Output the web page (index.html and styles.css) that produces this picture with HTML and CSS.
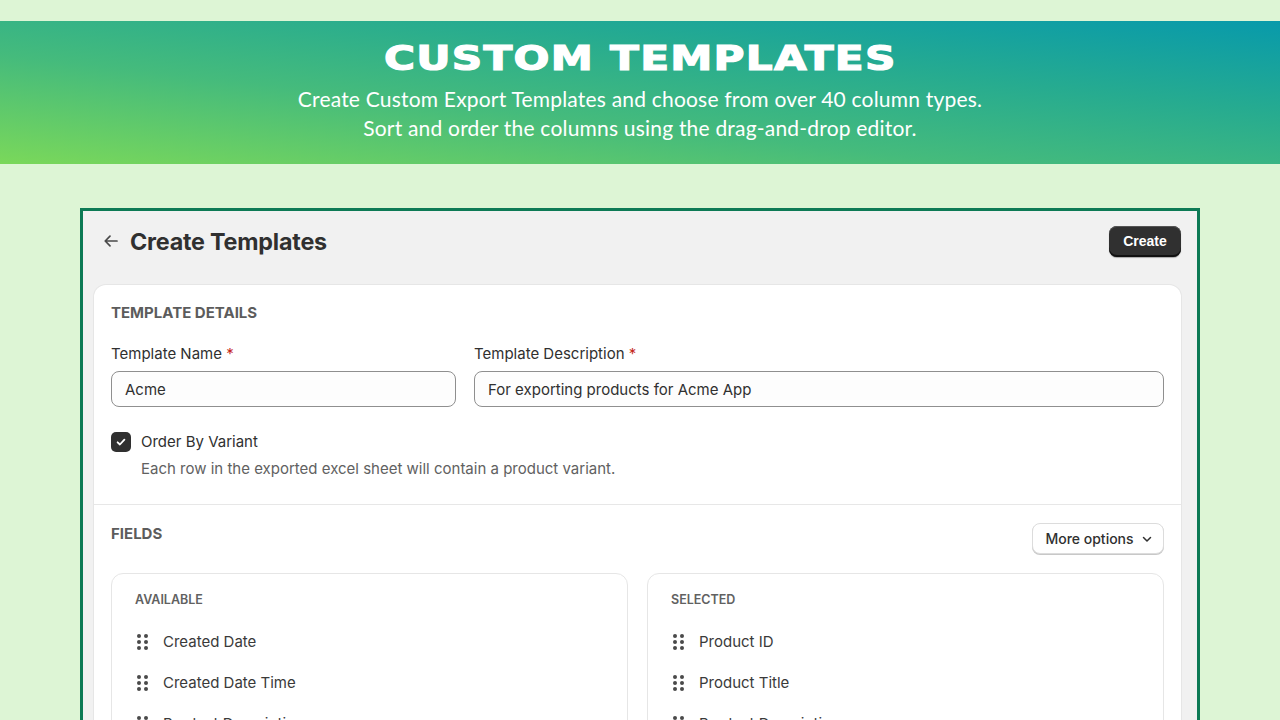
FILE: index.html
```html
<!DOCTYPE html>
<html>
<head>
<meta charset="utf-8">
<link rel="stylesheet" href="styles.css">
</head>
<body>
<div class="page">
  <header class="banner">
    <h1 class="banner-title">CUSTOM TEMPLATES</h1>
    <p class="banner-sub">Create Custom Export Templates and choose from over 40 column types.<br>Sort and order the columns using the drag-and-drop editor.</p>
  </header>

  <div class="window">
    <div class="topbar">
      <div class="topbar-left">
        <svg class="back" width="18" height="18" viewBox="0 0 18 18"><path d="M15 9H3.5M8 4.2 3.2 9 8 13.8" fill="none" stroke="#4a4a4a" stroke-width="1.7" stroke-linecap="round" stroke-linejoin="round"/></svg>
        <h2 class="page-title">Create Templates</h2>
      </div>
      <button class="btn-primary">Create</button>
    </div>

    <div class="card">
      <section class="section details">
        <h3 class="section-title">TEMPLATE DETAILS</h3>
        <div class="form-grid">
          <div class="field">
            <label class="label">Template Name <span class="req">*</span></label>
            <div class="input">Acme</div>
          </div>
          <div class="field">
            <label class="label">Template Description <span class="req">*</span></label>
            <div class="input">For exporting products for Acme App</div>
          </div>
        </div>
        <div class="check-row">
          <span class="checkbox"><svg width="12" height="12" viewBox="0 0 12 12"><path d="M2.6 6.3 4.9 8.5 9.4 3.6" fill="none" stroke="#fff" stroke-width="1.8" stroke-linecap="round" stroke-linejoin="round"/></svg></span>
          <div class="check-text">
            <div class="check-label">Order By Variant</div>
            <div class="help">Each row in the exported excel sheet will contain a product variant.</div>
          </div>
        </div>
      </section>

      <section class="section fields">
        <div class="fields-head">
          <h3 class="section-title">FIELDS</h3>
          <button class="btn-secondary">More options
            <svg width="16" height="16" viewBox="0 0 16 16"><path d="M4.5 6.5 8 10l3.5-3.5" fill="none" stroke="#303030" stroke-width="1.5" stroke-linecap="round" stroke-linejoin="round"/></svg>
          </button>
        </div>
        <div class="lists">
          <div class="list">
            <div class="list-title">AVAILABLE</div>
            <div class="item"><span class="grip"><i></i><i></i><i></i><i></i><i></i><i></i></span>Created Date</div>
            <div class="item"><span class="grip"><i></i><i></i><i></i><i></i><i></i><i></i></span>Created Date Time</div>
            <div class="item"><span class="grip"><i></i><i></i><i></i><i></i><i></i><i></i></span>Product Description</div>
          </div>
          <div class="list">
            <div class="list-title">SELECTED</div>
            <div class="item"><span class="grip"><i></i><i></i><i></i><i></i><i></i><i></i></span>Product ID</div>
            <div class="item"><span class="grip"><i></i><i></i><i></i><i></i><i></i><i></i></span>Product Title</div>
            <div class="item"><span class="grip"><i></i><i></i><i></i><i></i><i></i><i></i></span>Product Description</div>
          </div>
        </div>
      </section>
    </div>
  </div>
</div>
</body>
</html>
```

FILE: styles.css
```css
* { box-sizing: border-box; }
html, body { margin: 0; padding: 0; }
body {
  width: 1280px;
  height: 720px;
  overflow: hidden;
  background: #ddf5d5;
  font-family: Inter, "Noto Sans", sans-serif;
  color: #303030;
}
.page {
  padding-top: 21px;
  height: 720px;
  overflow: hidden;
}
.banner {
  height: 143px;
  background: linear-gradient(to top right, #7ad85a 0%, #45bb7c 38%, #26ab90 68%, #089aab 100%);
  text-align: center;
  color: #fff;
  padding-top: 21px;
}
.banner-title {
  margin: 0;
  font-family: "DejaVu Sans", sans-serif;
  font-weight: 900;
  font-size: 33px;
  line-height: 34px;
  letter-spacing: 1px;
  display: inline-block;
  transform: scaleX(1.28);
  -webkit-text-stroke: 1.2px #fff;
}
.banner-sub {
  margin: 8px 0 0;
  font-family: Lato, sans-serif;
  font-weight: 400;
  font-size: 21px;
  line-height: 29px;
  letter-spacing: 0.2px;
}
.window {
  margin: 44px 80px 0;
  height: 600px;
  border: 3px solid #0d7a55;
  border-bottom: none;
  background: #f1f1f1;
  padding: 0 16px 0 11px;
}
.topbar {
  display: flex;
  align-items: center;
  justify-content: space-between;
  height: 74px;
  padding: 0 0 14px 8px;
}
.topbar-left {
  display: flex;
  align-items: center;
  gap: 10px;
}
.back { display: block; }
.page-title {
  margin: 0;
  font-size: 23.3px;
  font-weight: 700;
  color: #303030;
  letter-spacing: -0.2px;
}
.btn-primary {
  width: 72px;
  height: 31px;
  border: none;
  border-radius: 8px;
  background: #303030;
  color: #fff;
  font-family: "Liberation Sans", Arial, sans-serif;
  font-weight: 700;
  font-size: 14px;
  box-shadow: inset 0 -2px 0 #111, inset 0 1px 0 #555, 0 1px 1px rgba(0,0,0,0.3);
  padding: 0;
}
.card {
  background: #fff;
  border-radius: 12px;
  box-shadow: 0 0 0 1px #e6e6e6, 0 1px 0 #dcdcdc;
}
.section {
  padding: 18px 17px 0;
}
.details {
  padding-bottom: 25px;
  border-bottom: 1px solid #e7e7e7;
}
.section-title {
  margin: 0;
  font-size: 15px;
  line-height: 20px;
  font-weight: 700;
  color: #5c5c5c;
}
.form-grid {
  display: grid;
  grid-template-columns: 345px 1fr;
  gap: 18px;
  margin-top: 21px;
}
.label {
  display: block;
  font-size: 15px;
  line-height: 20px;
  color: #303030;
  margin-bottom: 7px;
}
.req { color: #c5281c; }
.input {
  height: 36px;
  border: 1px solid #8f8f8f;
  border-radius: 8px;
  background: #fdfdfd;
  padding: 0 13px;
  display: flex;
  align-items: center;
  font-size: 15px;
  color: #303030;
}
.check-row {
  display: flex;
  gap: 10px;
  margin-top: 25px;
}
.checkbox {
  width: 20px;
  height: 20px;
  border-radius: 5px;
  background: #303030;
  display: flex;
  align-items: center;
  justify-content: center;
  flex: none;
}
.check-label {
  font-size: 15px;
  line-height: 20px;
  color: #303030;
}
.help {
  font-size: 15px;
  line-height: 20px;
  color: #616161;
  margin-top: 7px;
}
.fields {
  padding-top: 18px;
}
.fields-head {
  display: flex;
  justify-content: space-between;
  align-items: flex-start;
}
.fields-head .section-title { margin-top: 1px; }
.btn-secondary {
  height: 31px;
  width: 132px;
  border: 1px solid #dcdcdc;
  border-radius: 8px;
  background: #fff;
  box-shadow: 0 1px 0 #c8c8c8;
  font-family: Inter, sans-serif;
  font-size: 14px;
  font-weight: 500;
  color: #303030;
  display: flex;
  align-items: center;
  justify-content: center;
  gap: 5px;
  padding: 0 0 0 4px;
}
.btn-secondary svg { display: block; }
.lists {
  display: grid;
  grid-template-columns: 1fr 1fr;
  gap: 19px;
  margin-top: 19px;
}
.list {
  border: 1px solid #e6e6e6;
  border-radius: 12px;
  padding: 17px 23px 0;
  height: 200px;
}
.list-title {
  font-size: 12.5px;
  line-height: 18px;
  font-weight: 600;
  color: #616161;
}
.item {
  display: flex;
  align-items: center;
  height: 41px;
  font-size: 15px;
  color: #3a3a3a;
  padding-left: 2px;
}
.list-title + .item { margin-top: 12px; }
.grip {
  display: grid;
  grid-template-columns: 4px 4px;
  grid-template-rows: 4px 4px 4px;
  column-gap: 3px;
  row-gap: 2px;
  margin-right: 15px;
  width: 11px;
}
.grip i {
  display: block;
  width: 4px;
  height: 4px;
  border-radius: 50%;
  background: #4a4a4a;
}
```
